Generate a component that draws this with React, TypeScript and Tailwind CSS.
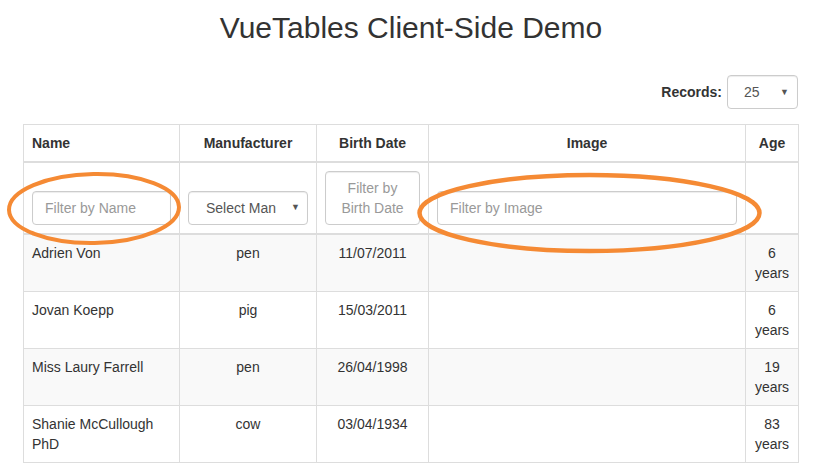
import React from "react";

const rows = [
  { name: "Adrien Von", man: "pen", date: "11/07/2011", age: "6" },
  { name: "Jovan Koepp", man: "pig", date: "15/03/2011", age: "6" },
  { name: "Miss Laury Farrell", man: "pen", date: "26/04/1998", age: "19" },
  { name: "Shanie McCullough PhD", man: "cow", date: "03/04/1934", age: "83" },
];

export default function App() {
  return (
    <div
      className="relative w-[814px] h-[465px] overflow-hidden bg-white text-[#333] text-[14px] leading-[20px]"
      style={{ fontFamily: '"Liberation Sans", Arial, sans-serif' }}
    >
      <h1 className="mt-[11px] pl-[8px] text-center text-[30px] leading-[33px] font-normal text-[#333]">
        VueTables Client-Side Demo
      </h1>

      <div className="mt-[31px] mr-[16px] flex items-center justify-end gap-[5px]">
        <span className="font-bold">Records:</span>
        <div className="flex h-[34px] w-[71px] items-center justify-between rounded-[4px] border border-[#ccc] pl-[16px] pr-[8px] text-[#555] shadow-[inset_0_1px_1px_rgba(0,0,0,0.075)]">
          <span>25</span>
          <span className="text-[9px] text-[#555]">▼</span>
        </div>
      </div>

      <table className="mt-[15px] ml-[23px] w-[775px] table-fixed border-collapse border border-[#ddd]">
        <colgroup>
          <col className="w-[156px]" />
          <col className="w-[137px]" />
          <col className="w-[112px]" />
          <col className="w-[317px]" />
          <col className="w-[53px]" />
        </colgroup>
        <thead>
          <tr>
            <th className="border border-b-2 border-[#ddd] p-[8px] text-left align-bottom font-bold">Name</th>
            <th className="border border-b-2 border-[#ddd] p-[8px] text-center align-bottom font-bold">Manufacturer</th>
            <th className="border border-b-2 border-[#ddd] p-[8px] text-center align-bottom font-bold">Birth Date</th>
            <th className="border border-b-2 border-[#ddd] p-[8px] text-center align-bottom font-bold">Image</th>
            <th className="border border-b-2 border-[#ddd] p-[8px] text-center align-bottom font-bold">Age</th>
          </tr>
          <tr>
            <th className="border border-b-2 border-[#ddd] p-[8px] align-bottom font-normal">
              <input
                className="block h-[34px] w-full rounded-[4px] border border-[#ccc] px-[12px] text-[14px] text-[#555] placeholder-[#999] shadow-[inset_0_1px_1px_rgba(0,0,0,0.075)] outline-none"
                placeholder="Filter by Name"
              />
            </th>
            <th className="border border-b-2 border-[#ddd] p-[8px] align-bottom font-normal">
              <div className="flex h-[34px] w-full items-center justify-between rounded-[4px] border border-[#ccc] pl-[17px] pr-[7px] text-[#555] shadow-[inset_0_1px_1px_rgba(0,0,0,0.075)]">
                <span className="inline-block w-[70px] overflow-hidden whitespace-nowrap text-left">Select Manu</span>
                <span className="mb-[2px] text-[9px] leading-[10px] text-[#555]">▼</span>
              </div>
            </th>
            <th className="border border-b-2 border-[#ddd] p-[8px] align-bottom font-normal">
              <div className="h-[54px] w-full rounded-[4px] border border-[#ccc] px-[6px] py-[6px] text-center text-[#999] shadow-[inset_0_1px_1px_rgba(0,0,0,0.075)]">
                Filter by Birth Date
              </div>
            </th>
            <th className="border border-b-2 border-[#ddd] p-[8px] align-bottom font-normal">
              <input
                className="block h-[34px] w-full rounded-[4px] border border-[#ccc] px-[12px] text-[14px] text-[#555] placeholder-[#999] shadow-[inset_0_1px_1px_rgba(0,0,0,0.075)] outline-none"
                placeholder="Filter by Image"
              />
            </th>
            <th className="border border-b-2 border-[#ddd] p-[8px] align-bottom font-normal"></th>
          </tr>
        </thead>
        <tbody>
          {rows.map((r, i) => (
            <tr key={i} className={i % 2 === 0 ? "bg-[#f9f9f9]" : "bg-white"}>
              <td className="border border-[#ddd] p-[8px] align-top text-left">{r.name}</td>
              <td className="border border-[#ddd] p-[8px] align-top text-center">{r.man}</td>
              <td className="border border-[#ddd] p-[8px] align-top text-center">{r.date}</td>
              <td className="border border-[#ddd] p-[8px] align-top"></td>
              <td className="border border-[#ddd] p-[8px] align-top text-center">
                {r.age} years
              </td>
            </tr>
          ))}
        </tbody>
      </table>

      <svg
        className="pointer-events-none absolute left-0 top-0"
        width="814"
        height="465"
        viewBox="0 0 814 465"
      >
        <ellipse cx="94" cy="208.5" rx="85" ry="34.5" fill="none" stroke="#f58a34" strokeWidth="4" transform="rotate(-1 94 208.5)" />
        <ellipse cx="589.5" cy="213" rx="170" ry="38" fill="none" stroke="#f58a34" strokeWidth="4.5" />
      </svg>
    </div>
  );
}
